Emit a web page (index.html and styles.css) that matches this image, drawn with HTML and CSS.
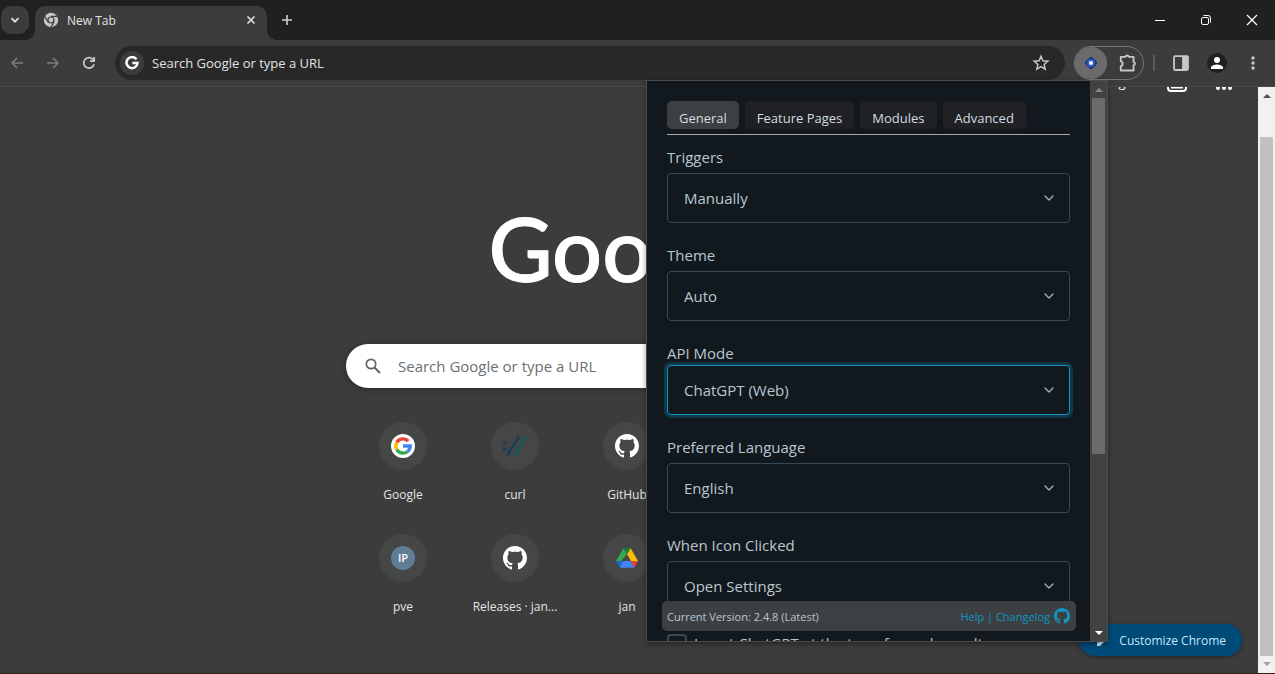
FILE: index.html
```html
<!DOCTYPE html>
<html lang="en">
<head>
  <meta charset="UTF-8">
  <title>New Tab</title>
  <link rel="stylesheet" href="styles.css">
</head>

<body>
  <!-- shared icons -->
  <svg class="sprite" aria-hidden="true">
    <symbol id="github" viewBox="0 0 16 16">
      <path fill="currentColor" d="M8 0C3.58 0 0 3.58 0 8c0 3.54 2.29 6.53 5.47 7.59.4.07.55-.17.55-.38 0-.19-.01-.82-.01-1.49-2.01.37-2.53-.49-2.69-.94-.09-.23-.48-.94-.82-1.13-.28-.15-.68-.52-.01-.53.63-.01 1.08.58 1.23.82.72 1.21 1.87.87 2.33.66.07-.52.28-.87.51-1.07-1.78-.2-3.64-.89-3.64-3.95 0-.87.31-1.59.82-2.15-.08-.2-.36-1.02.08-2.12 0 0 .67-.21 2.2.82.64-.18 1.32-.27 2-.27s1.36.09 2 .27c1.53-1.04 2.2-.82 2.2-.82.44 1.1.16 1.92.08 2.12.51.56.82 1.27.82 2.15 0 3.07-1.87 3.75-3.65 3.95.29.25.54.73.54 1.48 0 1.07-.01 1.93-.01 2.2 0 .21.15.46.55.38A8.01 8.01 0 0 0 16 8c0-4.42-3.58-8-8-8z"/>
    </symbol>
  </svg>

  <div class="browser">
    <header class="tab-strip">
      <button class="tab-search" aria-label="Search tabs">
        <svg width="10" height="10" viewBox="0 0 10 10"><path d="M1.5 3.2 5 6.7l3.5-3.5" fill="none" stroke="#e3e3e3" stroke-width="1.8"/></svg>
      </button>
      <div class="tab">
        <svg width="16" height="16" viewBox="0 0 16 16">
          <circle cx="8" cy="8" r="7.2" fill="#c7c7c7"/>
          <circle cx="8" cy="8" r="3.6" fill="#3c3c3c"/>
          <circle cx="8" cy="8" r="2.4" fill="#c7c7c7"/>
          <path d="M8 4.4h6.5M4.9 9.8 1.7 4.2M11.1 9.8l-3.2 5.6" stroke="#3c3c3c" stroke-width="1.2"/>
        </svg>
        <span class="tab-title">New Tab</span>
        <button class="icon-btn tab-close" aria-label="Close tab">
          <svg width="10" height="10" viewBox="0 0 10 10"><path d="m1.5 1.5 7 7m0-7-7 7" stroke="#e3e3e3" stroke-width="1.6"/></svg>
        </button>
      </div>
      <button class="icon-btn new-tab" aria-label="New tab">
        <svg width="12" height="12" viewBox="0 0 12 12"><path d="M6 1v10M1 6h10" stroke="#d0d0d0" stroke-width="1.6"/></svg>
      </button>
      <div class="window-controls">
        <button class="icon-btn" aria-label="Minimize"><svg width="12" height="12" viewBox="0 0 12 12"><path d="M1 6.500h10" stroke="#fff"/></svg></button>
        <button class="icon-btn" aria-label="Restore"><svg width="12" height="12" viewBox="0 0 12 12"><g fill="none" stroke="#fff"><rect x="1.500" y="3.500" width="7" height="7" rx="1.500"/><path d="M3.500 1.500H8a2.500 2.500 0 0 1 2.500 2.500v4.500"/></g></svg></button>
        <button class="icon-btn" aria-label="Close"><svg width="12" height="12" viewBox="0 0 12 12"><path d="m1 1 10 10m0-10L1 11" stroke="#fff" stroke-width="1.200"/></svg></button>
      </div>
    </header>

    <nav class="toolbar">
      <button class="icon-btn nav-btn" aria-label="Back"><svg width="16" height="16" viewBox="0 0 16 16"><path d="M14 8H3m5-5L3 8l5 5" fill="none" stroke="#7b7b7b" stroke-width="1.6"/></svg></button>
      <button class="icon-btn nav-btn" aria-label="Forward"><svg width="16" height="16" viewBox="0 0 16 16"><path d="M2 8h11M8 3l5 5-5 5" fill="none" stroke="#7b7b7b" stroke-width="1.6"/></svg></button>
      <button class="icon-btn nav-btn" aria-label="Reload"><svg width="16" height="16" viewBox="0 0 16 16"><path d="M13 9.200A5.200 5.200 0 1 1 11.800 4.400L13 5.600M13.200 2v4.200H9" fill="none" stroke="#c7c7c7" stroke-width="1.7"/></svg></button>
      <div class="omnibox">
        <span class="site-icon">
          <svg width="14" height="14" viewBox="0 0 14 14"><path d="M11.400 3.300A5.500 5.500 0 1 0 12.500 7H7.300" fill="none" stroke="#fff" stroke-width="2.500"/></svg>
        </span>
        <input class="address" type="text" aria-label="Address" placeholder="Search Google or type a URL">
        <button class="icon-btn" aria-label="Bookmark this tab"><svg width="18" height="18" viewBox="0 0 18 18"><path d="m9 2.300 1.900 4.500 4.900.4-3.700 3.200 1.100 4.800L9 12.600l-4.200 2.600 1.100-4.800-3.700-3.200 4.900-.4z" fill="none" stroke="#c7c7c7" stroke-width="1.500"/></svg></button>
      </div>
      <div class="extensions">
        <button class="icon-btn ext-active" aria-label="ChatGPTBox">
          <svg width="16" height="16" viewBox="0 0 16 16">
            <rect x="3" y="3" width="10" height="10" rx="2.500" transform="rotate(45 8 8)" fill="#1a3580"/>
            <circle cx="8" cy="8" r="4" fill="#2f5fc4"/>
            <circle cx="8" cy="8" r="2" fill="#fff"/>
          </svg>
        </button>
        <button class="icon-btn ext-menu" aria-label="Extensions">
          <svg width="20" height="20" viewBox="0 0 18 18"><path d="M2.500 3.500h4.200a1.600 1.600 0 0 1 3.100 0h4.200V8a1.600 1.600 0 0 1 0 3.100v4.700H2.500v-4a2.200 2.200 0 0 0 0-4.300z" fill="none" stroke="#c7c7c7" stroke-width="1.700" stroke-linejoin="round"/></svg>
        </button>
      </div>
      <span class="divider"></span>
      <button class="icon-btn nav-btn" aria-label="Side panel"><svg width="18" height="18" viewBox="0 0 16 16"><rect x="1.800" y="1.800" width="12.400" height="12.400" rx="1" fill="none" stroke="#c7c7c7" stroke-width="1.600"/><path d="M9 2h5v12H9z" fill="#c7c7c7"/></svg></button>
      <button class="icon-btn nav-btn" aria-label="Profile"><svg width="20" height="20" viewBox="0 0 20 20"><circle cx="10" cy="10" r="10" fill="#1f2120"/><circle cx="10" cy="7" r="3" fill="#fff"/><path d="M4 16v-1.500C4 12.400 8 11.500 10 11.500s6 .9 6 3V16z" fill="#fff"/></svg></button>
      <button class="icon-btn nav-btn" aria-label="Menu"><svg width="16" height="16" viewBox="0 0 16 16" fill="#c7c7c7"><circle cx="8" cy="3" r="1.700"/><circle cx="8" cy="8" r="1.700"/><circle cx="8" cy="13" r="1.700"/></svg></button>
    </nav>

    <div class="viewport">
      <main class="page">
        <!-- scrolled almost out of view -->
        <div class="page-links">
          <a href="#">Images</a>
          <svg width="20" height="20" viewBox="0 0 20 20"><path d="M7 1v4M13 1v4M5 6h10v6a5 3 0 0 1-10 0z" fill="none" stroke="#fff" stroke-width="2"/><rect x="1" y="10" width="18" height="9" rx="3" fill="#3c3c3c" stroke="#fff" stroke-width="2"/><path d="M4 15.500h12" stroke="#fff" stroke-width="2"/></svg>
          <svg width="18" height="18" viewBox="0 0 18 18" fill="#fff"><circle cx="3" cy="3" r="2"/><circle cx="9" cy="3" r="2"/><circle cx="15" cy="3" r="2"/><circle cx="3" cy="9" r="2"/><circle cx="9" cy="9" r="2"/><circle cx="15" cy="9" r="2"/><circle cx="3" cy="15" r="2"/><circle cx="9" cy="15" r="2"/><circle cx="15" cy="15" r="2"/></svg>
        </div>

        <div class="content">
          <h1 class="logo">Google</h1>
          <div class="search-box">
            <svg width="18" height="18" viewBox="0 0 18 18"><circle cx="7" cy="7" r="4.700" fill="none" stroke="#5f6368" stroke-width="1.700"/><path d="m10.500 10.500 5.500 5.500" stroke="#5f6368" stroke-width="2"/></svg>
            <input type="text" aria-label="Search" placeholder="Search Google or type a URL">
          </div>
          <div class="tiles">
            <a class="tile" href="#">
              <span class="tile-icon"><svg width="24" height="24" viewBox="0 0 24 24">
                <circle cx="12" cy="12" r="12" fill="#fff"/>
                <g fill="none" stroke-width="3.400">
                  <path d="M17.300 7.200A7.200 7.200 0 0 0 5.800 8.400" stroke="#ea4335"/>
                  <path d="M5.800 8.400a7.200 7.200 0 0 0 0 7.200" stroke="#fbbc05"/>
                  <path d="M5.800 15.600a7.200 7.200 0 0 0 10.800 1.900" stroke="#34a853"/>
                  <path d="M16.600 17.500A7.200 7.200 0 0 0 19.200 12H12" stroke="#4285f4"/>
                </g>
              </svg></span>
              <span class="tile-name">Google</span>
            </a>
            <a class="tile" href="#">
              <span class="tile-icon"><svg width="24" height="24" viewBox="0 0 24 24" fill="none">
                <g stroke="#0f3d5e"><circle cx="1.800" cy="9" r="1.400"/><circle cx="1.800" cy="15" r="1.400"/><path d="m5.600 19.500 9-15" stroke-width="2.200"/><circle cx="15" cy="3.800" r="1.500"/><circle cx="5.400" cy="20" r="1.500"/></g>
                <g stroke="#115c56"><path d="m12.800 19.500 9-15" stroke-width="2.200"/><circle cx="22.200" cy="3.800" r="1.500"/><circle cx="12.600" cy="20" r="1.500"/></g>
              </svg></span>
              <span class="tile-name">curl</span>
            </a>
            <a class="tile" href="#">
              <span class="tile-icon"><svg width="24" height="24"><use href="#github"/></svg></span>
              <span class="tile-name">GitHub</span>
            </a>
            <a class="tile" href="#">
              <span class="tile-icon"><span class="ip-badge">IP</span></span>
              <span class="tile-name">pve</span>
            </a>
            <a class="tile" href="#">
              <span class="tile-icon"><svg width="24" height="24"><use href="#github"/></svg></span>
              <span class="tile-name">Releases · jan...</span>
            </a>
            <a class="tile" href="#">
              <span class="tile-icon"><svg width="24" height="24" viewBox="0 0 24 24">
                <path d="M8.300 2.200 1 15l3.600 2L12 8z" fill="#34a853"/>
                <path d="M8.300 2.200h7.400L12 8.600z" fill="#188038"/>
                <path d="M15.700 2.200 23 15h-7.300L12 8.600z" fill="#fbbc04"/>
                <path d="M1 15h7.300l-3.700 6.500z" fill="#1967d2"/>
                <path d="M8.300 15h7.400l3.700 6.800H4.600z" fill="#4285f4"/>
                <path d="M15.700 15H23l-3.600 6.800z" fill="#ea4335"/>
                <path d="M12 8.600 15.700 15H8.300z" fill="#444746"/>
              </svg></span>
              <span class="tile-name">jan</span>
            </a>
          </div>
        </div>
      </main>

      <div class="scrollbar page-scrollbar"><i class="arrow up"></i><div class="thumb"></div><i class="arrow down"></i></div>

      <button class="customize">
        <svg width="16" height="16" viewBox="0 0 16 16"><path d="m2 11 8-8 3 3-8 8H2z" fill="#c2e7ff"/></svg>
        Customize Chrome
      </button>

      <!-- extension popup -->
      <section class="popup">
        <div class="settings">
          <div class="settings-tabs" role="tablist">
            <button class="active" role="tab" aria-selected="true">General</button>
            <button role="tab">Feature Pages</button>
            <button role="tab">Modules</button>
            <button role="tab">Advanced</button>
          </div>
          <form>
            <div class="field">
              <label for="triggers">Triggers</label>
              <select id="triggers"><option>Manually</option></select>
            </div>
            <div class="field">
              <label for="theme">Theme</label>
              <select id="theme"><option>Auto</option></select>
            </div>
            <div class="field tight">
              <label for="api-mode">API Mode</label>
              <select id="api-mode" class="focused"><option>ChatGPT (Web)</option></select>
            </div>
            <div class="field">
              <label for="language">Preferred Language</label>
              <select id="language"><option>English</option></select>
            </div>
            <div class="field">
              <label for="icon-click">When Icon Clicked</label>
              <select id="icon-click"><option>Open Settings</option></select>
            </div>
            <label class="check"><input type="checkbox"> Insert ChatGPT at the top of search results</label>
          </form>
          <footer class="version-bar">
            <span>Current Version: 2.4.8 (Latest)</span>
            <span class="version-links">
              <span><a href="#">Help</a> | <a href="#">Changelog</a></span>
              <a href="#" aria-label="GitHub"><svg width="16" height="16"><use href="#github"/></svg></a>
            </span>
          </footer>
        </div>
        <div class="scrollbar popup-scrollbar"><i class="arrow up"></i><div class="thumb"></div><i class="arrow down"></i></div>
      </section>
    </div>
  </div>
</body>
</html>
```
FILE: styles.css
```css
* {
  box-sizing: border-box;
}
body {
  margin: 0;
  background-color: #3c3c3c;
  color: #e3e3e3;
  font-family: "Segoe UI", "Open Sans", "Noto Sans", sans-serif;
  font-size: 13px;
}
button, input, select {
  font-family: inherit;
}
button {
  border: none;
  padding: 0;
  cursor: pointer;
}
svg {
  display: block;
  flex: none;
}
.sprite {
  position: absolute;
  width: 0;
  height: 0;
}
.browser {
  display: flex;
  flex-direction: column;
  height: 100vh;
  border-bottom: 1px solid #3a1f1f;
  overflow: hidden;
}
.icon-btn {
  display: flex;
  align-items: center;
  justify-content: center;
  background: none;
}

/* tab strip */
.tab-strip {
  display: flex;
  align-items: center;
  height: 40px;
  flex: none;
  background-color: #1f2120;
}
.tab-search {
  display: flex;
  align-items: center;
  justify-content: center;
  width: 28px;
  height: 28px;
  margin: 0 6px 0 1px;
  border-radius: 10px;
  background-color: #3c3c3c;
}
.tab {
  position: relative;
  display: flex;
  align-items: center;
  gap: 8px;
  align-self: flex-end;
  width: 232px;
  height: 34px;
  padding: 0 8px 6px;
  border-radius: 10px 10px 0 0;
  background-color: #3c3c3c;
}
.tab::before, .tab::after {
  content: "";
  position: absolute;
  bottom: 0;
  width: 10px;
  height: 10px;
}
.tab::before {
  right: 100%;
  background: radial-gradient(circle at 0 0, #1f2120 10px, #3c3c3c 10px);
}
.tab::after {
  left: 100%;
  background: radial-gradient(circle at 100% 0, #1f2120 10px, #3c3c3c 10px);
}
.tab-title {
  flex: 1;
  font-size: 12px;
}
.tab-close {
  width: 16px;
  height: 16px;
}
.new-tab {
  width: 28px;
  height: 28px;
  margin-left: 6px;
}
.window-controls {
  display: flex;
  margin-left: auto;
}
.window-controls button {
  width: 46px;
  height: 40px;
}

/* toolbar */
.toolbar {
  display: flex;
  align-items: center;
  height: 47px;
  flex: none;
  padding-right: 4px;
  border-bottom: 1px solid #4a4a4a;
  background-color: #3c3c3c;
}
.nav-btn {
  width: 36px;
  height: 34px;
}
.toolbar > .nav-btn:first-child {
  margin-left: -1px;
}
.omnibox {
  display: flex;
  align-items: center;
  flex: 1;
  height: 34px;
  margin: 0 9px 0 8px;
  padding: 0 15px 0 5px;
  border-radius: 17px;
  background-color: #282828;
}
.site-icon {
  display: flex;
  align-items: center;
  justify-content: center;
  width: 24px;
  height: 24px;
  border-radius: 50%;
  background-color: #3c3c3c;
}
.address {
  flex: 1;
  padding: 0 8px;
  border: none;
  outline: none;
  background: none;
  font-size: 13px;
}
.address::placeholder {
  color: #e3e3e3;
  opacity: 1;
}
.extensions {
  display: flex;
  height: 34px;
  border: 1px solid #757575;
  border-radius: 17px;
}
.ext-active {
  width: 32px;
  height: 32px;
  border-radius: 50%;
  background-color: #6b6b6b;
}
.ext-menu {
  width: 36px;
  padding-left: 6px;
}
.divider {
  width: 2px;
  height: 16px;
  margin: 0 8px 0 9px;
  background-color: #5a5a5a;
}

/* new tab page */
.viewport {
  position: relative;
  display: flex;
  flex: 1;
  min-height: 0;
}
.page {
  flex: 1;
  min-width: 0;
  padding-right: 4px;
  overflow: hidden;
}
.page-links {
  display: flex;
  align-items: center;
  justify-content: flex-end;
  gap: 28px;
  height: 20px;
  margin-top: -15px;
  padding-right: 21px;
}
.page-links a {
  color: #fff;
  text-decoration: none;
}
.content {
  width: 562px;
  margin: 0 auto;
}
.logo {
  margin: 106px 0 46px;
  color: #fff;
  font-family: Lato, sans-serif;
  font-size: 88px;
  font-weight: 500;
  line-height: 100px;
  text-align: center;
  -webkit-text-stroke: 1px #fff;
}
.search-box {
  display: flex;
  align-items: center;
  gap: 16px;
  height: 44px;
  padding: 0 18px;
  border-radius: 22px;
  background-color: #fff;
  box-shadow: 0 1px 6px rgba(0, 0, 0, 0.3);
}
.search-box input {
  flex: 1;
  padding: 0;
  border: none;
  outline: none;
  background: none;
  font-size: 15px;
}
.search-box input::placeholder {
  color: #6b6f74;
  opacity: 1;
}
.tiles {
  display: grid;
  grid-template-columns: repeat(3, 112px);
  grid-auto-rows: 112px;
  margin-top: 34px;
  padding-left: 1px;
}
.tile {
  display: flex;
  flex-direction: column;
  align-items: center;
  gap: 16px;
  color: #e3e3e3;
  text-decoration: none;
}
.tile-icon {
  display: flex;
  align-items: center;
  justify-content: center;
  width: 48px;
  height: 48px;
  border-radius: 50%;
  background-color: #444746;
  color: #fff;
}
.tile-name {
  font-size: 12px;
  line-height: 18px;
}
.ip-badge {
  width: 24px;
  border-radius: 50%;
  background-color: #5f7d95;
  font-size: 11px;
  font-weight: 600;
  line-height: 24px;
  text-align: center;
}
.customize {
  position: absolute;
  right: 33px;
  bottom: 17px;
  display: flex;
  align-items: center;
  gap: 8px;
  height: 32px;
  padding: 0 16px;
  border-radius: 16px;
  background-color: #004a77;
  box-shadow: 0 1px 4px rgba(0, 0, 0, 0.4);
  color: #c2e7ff;
  font-size: 12px;
}

/* scrollbars */
.scrollbar {
  display: flex;
  flex-direction: column;
  align-items: center;
  flex: none;
  width: 17px;
}
.arrow {
  border: 4px solid transparent;
}
.arrow.up {
  border-top: none;
  border-bottom-color: currentColor;
}
.arrow.down {
  border-bottom: none;
  border-top-color: currentColor;
}
.thumb {
  width: 13px;
}
.page-scrollbar {
  padding: 7px 0;
  background-color: #f1f1f1;
}
.page-scrollbar .thumb {
  flex: 1;
  margin: 39px 0 6px;
  background-color: #c1c1c1;
}
.page-scrollbar .up {
  color: #505050;
}
.page-scrollbar .down {
  color: #a3a3a3;
}
.popup-scrollbar {
  justify-content: space-between;
  padding: 7px 0 6px;
  background-color: #424242;
}
.popup-scrollbar .thumb {
  height: 65%;
  margin: 6px 0 auto;
  background-color: #6b6b6b;
}
.popup-scrollbar .up {
  color: #8b8b8b;
}
.popup-scrollbar .down {
  color: #fff;
}

/* popup */
.popup {
  position: absolute;
  top: -7px;
  right: 167px;
  bottom: 31px;
  display: flex;
  width: 462px;
  border: 1px solid #4c4c4c;
  background-color: #424242;
  box-shadow: 0 2px 5px rgba(0, 0, 0, 0.4);
}
.settings {
  position: relative;
  flex: 1;
  padding: 20px 20px 0;
  overflow: hidden;
  background-color: #11191f;
  color: #bbc6ce;
}
.settings-tabs {
  display: flex;
  gap: 6px;
  margin-bottom: 10px;
  padding-bottom: 5px;
  border-bottom: 1px solid #aaa;
}
.settings-tabs button {
  height: 28px;
  padding: 5px 12px 0;
  border-radius: 5px;
  background-color: #202124;
  color: #d3dce2;
  font-size: 13px;
}
.settings-tabs .active {
  background-color: #3c4043;
}
.field {
  display: flex;
  flex-direction: column;
  gap: 4px;
  margin-bottom: 20px;
  font-size: 15px;
  line-height: 24px;
}
.field.tight {
  gap: 0;
}
.field select {
  appearance: none;
  width: 100%;
  height: 50px;
  padding: 0 16px;
  border: 1px solid #374956;
  border-radius: 4px;
  outline: none;
  background: #11191f url("data:image/svg+xml,%3Csvg xmlns='http://www.w3.org/2000/svg' viewBox='0 0 24 24' fill='none' stroke='%23a2afb9' stroke-width='2' stroke-linecap='round' stroke-linejoin='round'%3E%3Cpath d='m6 9 6 6 6-6'/%3E%3C/svg%3E") no-repeat right 12px center / 16px;
  color: #bbc6ce;
  font-size: 15px;
}
.field .focused {
  border-color: #1095c1;
  box-shadow: 0 0 0 3px #113848;
}
.check {
  display: flex;
  align-items: flex-start;
  gap: 7px;
  font-size: 15px;
  line-height: 24px;
  white-space: nowrap;
}
.check input {
  appearance: none;
  width: 20px;
  height: 20px;
  margin: 3px 0 0;
  border: 2px solid #374956;
  border-radius: 4px;
}
.version-bar {
  position: absolute;
  left: 15px;
  right: 14px;
  bottom: 10px;
  display: flex;
  align-items: center;
  justify-content: space-between;
  height: 30px;
  padding: 0 6px 0 5px;
  border-radius: 5px;
  background-color: #3c4043;
  font-size: 11px;
}
.version-links {
  display: flex;
  align-items: center;
  gap: 4px;
  color: #1095c1;
}
.version-links a {
  color: #1095c1;
  text-decoration: none;
}
```
